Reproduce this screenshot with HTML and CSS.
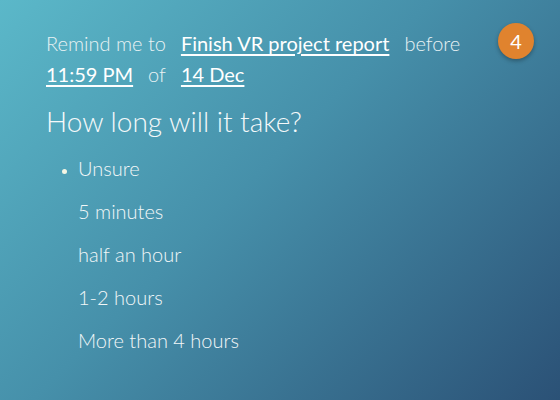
FILE: index.html
```html
<!DOCTYPE html>
<html>
<head>
<meta charset="utf-8">
<link rel="stylesheet" href="styles.css">
</head>
<body>
<div class="screen">
  <p class="sentence">
    <span class="word">Remind me to</span>
    <a class="field">Finish VR project report</a>
    <span class="word">before</span>
    <a class="field">11:59 PM</a>
    <span class="word">of</span>
    <a class="field">14 Dec</a>
  </p>
  <h1 class="question">How long will it take?</h1>
  <ul class="options">
    <li class="option current">Unsure</li>
    <li class="option">5 minutes</li>
    <li class="option">half an hour</li>
    <li class="option">1-2 hours</li>
    <li class="option">More than 4 hours</li>
  </ul>
  <div class="badge">4</div>
</div>
</body>
</html>
```
FILE: styles.css
```css
html, body {
  margin: 0;
  padding: 0;
}
body {
  width: 560px;
  height: 400px;
  overflow: hidden;
  font-family: Lato, "Open Sans", sans-serif;
  font-weight: 300;
  color: #f2f7f8;
}
.screen {
  position: relative;
  box-sizing: border-box;
  width: 560px;
  height: 400px;
  padding: 28px 80px 0 46px;
  background: linear-gradient(135deg, #5bb8c9 0%, #4690aa 45%, #2b5176 100%);
}
.sentence {
  margin: 0;
  font-size: 20px;
  line-height: 31px;
  display: flex;
  flex-wrap: wrap;
  column-gap: 15px;
}
.word {
  color: #e8f2f4;
}
.field {
  color: #ffffff;
  font-weight: 400;
  text-decoration: underline;
  text-underline-offset: 3px;
  text-decoration-thickness: 2px;
}
.question {
  margin: 13px 0 0;
  font-size: 28px;
  font-weight: 300;
  line-height: 36px;
  color: #f5f9fa;
}
.options {
  margin: 8px 0 0;
  padding: 0 0 0 32px;
  font-size: 20px;
  line-height: 43px;
}
.option {
  list-style: none;
}
.option.current {
  list-style: disc;
}
.option.current::marker {
  color: #f4f6e4;
  font-size: 14px;
}
.badge {
  position: absolute;
  left: 498px;
  top: 23px;
  width: 36px;
  height: 36px;
  border-radius: 50%;
  background: #e0832e;
  color: #fff;
  font-size: 20px;
  font-weight: 400;
  line-height: 36px;
  text-align: center;
  box-shadow: 0 2px 4px rgba(0, 0, 0, 0.3);
}
```
